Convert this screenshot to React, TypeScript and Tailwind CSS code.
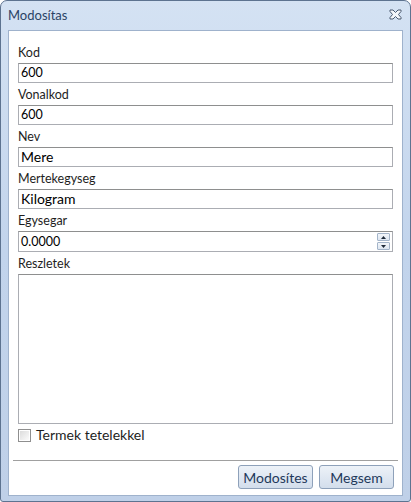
import { useState } from "react"

const font = { fontFamily: 'Lato, "Noto Sans", sans-serif' }

function Field({ label, value, big }: { label: string; value: string; big?: boolean }) {
  return (
    <div className="flex flex-col">
      <div className="h-[22px] pt-[4px] text-[12.5px] leading-[16px] text-[#1e1e1e]">{label}</div>
      <div className="flex h-[20px] items-center border border-[#abadb3] border-t-[#8e8f8f] bg-white px-[2px]">
        <span className={big ? "text-[14px] leading-[16px] text-black" : "text-[12.5px] leading-[16px] text-black"}>
          {value}
        </span>
      </div>
    </div>
  )
}

export default function App() {
  const [checked, setChecked] = useState(false)

  return (
    <div className="h-[502px] w-[411px] bg-white" style={font}>
      <div className="flex h-full w-full flex-col rounded-t-[7px] rounded-b-[3px] border border-[#5d7390] bg-gradient-to-b from-[#d4e2f3] via-[#c2d4ec] to-[#bfd0e8]">
        <div className="flex h-[29px] shrink-0 items-center justify-between pl-[7px] pr-[8px]">
          <span className="text-[13px] text-[#2a4366]">Modosítas</span>
          <svg width="13" height="11" viewBox="0 0 13 11" className="mb-[2px]">
            <path
              d="M1 1h3l2.5 2.5L9 1h3v1.5L9.5 5.5 12 8.5V10H9L6.5 7.5 4 10H1V8.5L3.5 5.5 1 2.5z"
              fill="#f4f7fb"
              stroke="#4a5a70"
              strokeWidth="1"
              strokeLinejoin="round"
            />
          </svg>
        </div>
        <div className="mx-[7px] mb-[7px] flex flex-1 flex-col border border-[#9fb2cc] bg-white">
          <div className="flex flex-1 flex-col px-[9px] pt-[10px]">
            <Field label="Kod" value="600" />
            <Field label="Vonalkod" value="600" />
            <Field label="Nev" value="Mere" big />
            <Field label="Mertekegyseg" value="Kilogram" big />
            <div className="flex flex-col">
              <div className="h-[22px] pt-[4px] text-[12.5px] leading-[16px] text-[#1e1e1e]">Egysegar</div>
              <div className="flex h-[21px] items-center justify-between border border-[#abadb3] border-t-[#8e8f8f] bg-white pl-[2px] pr-[2px]">
                <span className="text-[12.5px] leading-[16px] text-black">0.0000</span>
                <div className="flex h-[17px] w-[13px] flex-col gap-[1px]">
                  <div className="flex flex-1 items-center justify-center rounded-[1px] border border-[#a3b4c9] bg-gradient-to-b from-[#f3f6fa] to-[#dde6f1]">
                    <svg width="5" height="3" viewBox="0 0 5 3">
                      <path d="M2.5 0L5 3H0z" fill="#1e2a3a" />
                    </svg>
                  </div>
                  <div className="flex flex-1 items-center justify-center rounded-[1px] border border-[#a3b4c9] bg-gradient-to-b from-[#f3f6fa] to-[#dde6f1]">
                    <svg width="5" height="3" viewBox="0 0 5 3">
                      <path d="M0 0H5L2.5 3z" fill="#1e2a3a" />
                    </svg>
                  </div>
                </div>
              </div>
            </div>
            <div className="h-[22px] pt-[4px] text-[12.5px] leading-[16px] text-[#1e1e1e]">Reszletek</div>
            <div className="h-[150px] border border-[#abadb3] border-t-[#8e8f8f] bg-white" />
            <label className="mt-[4px] flex h-[14px] items-center gap-[5px]" onClick={() => setChecked(!checked)}>
              <span className="flex h-[13px] w-[13px] items-center justify-center border border-[#8f8f8f] bg-white">
                <span className="h-[9px] w-[9px] bg-gradient-to-br from-[#dcdcdc] to-[#fbfbfb]">
                  {checked ? <span className="block text-[9px] leading-[9px]">✓</span> : null}
                </span>
              </span>
              <span className="text-[14px] leading-[16px] text-[#1e1e1e]">Termek tetelekkel</span>
            </label>
          </div>
          <div className="mx-[4px] mt-[18px] h-px bg-[#a0a0a0]" />
          <div className="flex justify-end gap-[6px] pr-[8px] pt-[4px] pb-[6px]">
            <button className="h-[24px] w-[75px] rounded-[3px] border border-[#8ea1ba] bg-gradient-to-b from-[#edf2f8] to-[#d3deec] text-[14px] text-[#1e395b]">
              Modosítes
            </button>
            <button className="h-[24px] w-[75px] rounded-[3px] border border-[#8ea1ba] bg-gradient-to-b from-[#edf2f8] to-[#d3deec] text-[14px] text-[#1e395b]">
              Megsem
            </button>
          </div>
        </div>
      </div>
    </div>
  )
}
